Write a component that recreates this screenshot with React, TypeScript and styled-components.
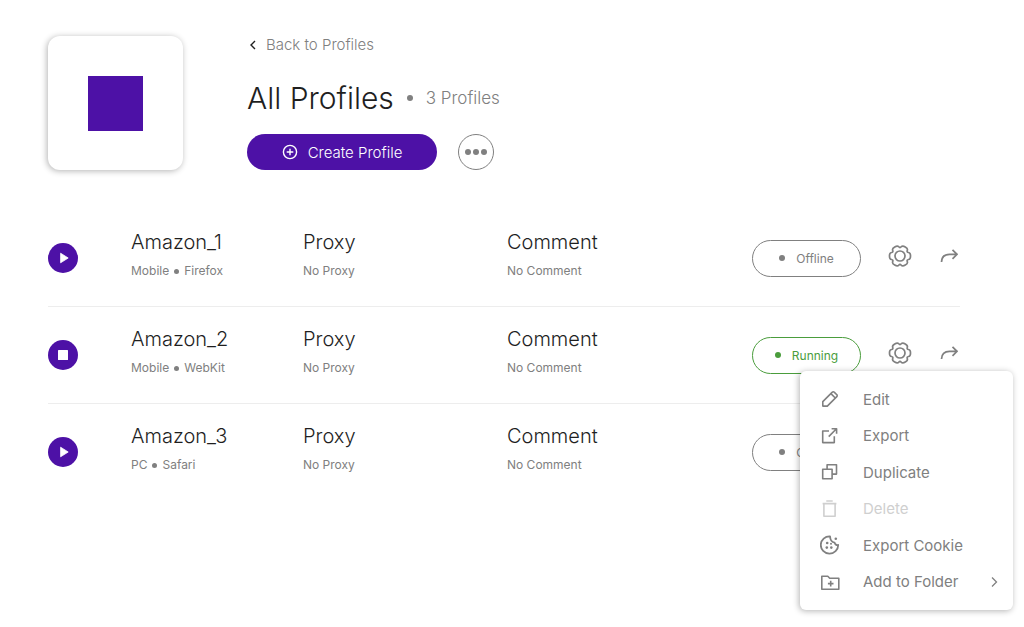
import React from "react";
import styled, { createGlobalStyle } from "styled-components";

const purple = "#4d11a6";
const grey = "#808080";
const green = "#4a9d3c";

const GlobalStyle = createGlobalStyle`
  * { box-sizing: border-box; }
  body {
    margin: 0;
    background: #fff;
    color: #1f1f1f;
    font-family: Inter, "Liberation Sans", sans-serif;
    font-size: 15px;
  }
  button { font: inherit; margin: 0; padding: 0; border: 0; background: none; cursor: pointer; }
  button:disabled { cursor: default; }
  svg { display: block; flex: none; }
  h1, h2, p, ul { margin: 0; padding: 0; list-style: none; }
`;

const Page = styled.main`
  min-height: 100vh;
  padding: 36px 64px 36px 48px;
`;

const Header = styled.header`
  display: flex;
  gap: 64px;
  margin-bottom: 40px;
`;

const FolderCard = styled.div`
  display: grid;
  place-items: center;
  flex: none;
  width: 135px;
  height: 134px;
  border-radius: 12px;
  box-shadow: -1px 1px 6px rgba(0, 0, 0, 0.3);
`;

const FolderColor = styled.div`
  width: 55px;
  height: 55px;
  background: ${purple};
`;

const Intro = styled.div`
  display: flex;
  flex-direction: column;
  align-items: flex-start;
`;

const BackLink = styled.a`
  display: flex;
  align-items: center;
  gap: 8px;
  color: ${grey};
  font-weight: 300;
  line-height: 18px;
  text-decoration: none;
`;

const TitleLine = styled.div`
  display: flex;
  align-items: center;
  gap: 13px;
  margin: 24px 0 16px;
`;

const Title = styled.h1`
  font-size: 30px;
  font-weight: 300;
  line-height: 40px;
`;

const Count = styled.span`
  color: ${grey};
  font-size: 17px;
  font-weight: 300;
  line-height: 24px;
`;

const Dot = styled.span<{ $size?: number }>`
  flex: none;
  width: ${(p) => p.$size ?? 6}px;
  height: ${(p) => p.$size ?? 6}px;
  border-radius: 50%;
  background: currentColor;
`;

const CountDot = styled(Dot)`
  color: ${grey};
`;

const HeaderActions = styled.div`
  display: flex;
  gap: 21px;
`;

const CreateButton = styled.button`
  && {
    display: flex;
    align-items: center;
    justify-content: center;
    gap: 10px;
    width: 190px;
    height: 36px;
    border-radius: 18px;
    background: ${purple};
    color: #fff;
    font-weight: 300;
  }
`;

const MoreButton = styled.button`
  && {
    display: flex;
    align-items: center;
    justify-content: center;
    gap: 2px;
    width: 36px;
    height: 36px;
    border: 1px solid ${grey};
    border-radius: 50%;
    color: ${grey};
  }
`;

const ProfileRow = styled.li`
  position: relative;
  display: grid;
  grid-template-columns: 83px 172fr 204fr 245fr 208px;
  align-items: center;
  height: 97px;
  border-bottom: 1px solid #ededed;

  &:last-child { border-bottom-color: transparent; }
`;

const RunButton = styled.button`
  && {
    display: grid;
    place-items: center;
    width: 30px;
    height: 30px;
    border-radius: 50%;
    background: ${purple};
    color: #fff;
  }
`;

const Field = styled.div`
  display: grid;
  gap: 8px;
  padding-bottom: 6px;
`;

const FieldTitle = styled.h2`
  font-size: 20px;
  font-weight: 300;
  line-height: 24px;
`;

const FieldNote = styled.p`
  display: flex;
  align-items: center;
  gap: 5px;
  color: ${grey};
  font-size: 12px;
  line-height: 18px;
`;

const RowActions = styled.div`
  display: flex;
  align-items: center;
  justify-content: space-between;
`;

const Status = styled.span<{ $running: boolean }>`
  display: flex;
  align-items: center;
  justify-content: center;
  gap: 11px;
  width: 109px;
  height: 37px;
  border: 1px solid currentColor;
  border-radius: 19px;
  color: ${(p) => (p.$running ? green : grey)};
  font-size: 12px;
`;

const RowTools = styled.div`
  display: flex;
  align-items: center;
  gap: 28px;
  padding: 0 2px 4px 0;
`;

const IconButton = styled.button`
  && { color: ${grey}; }
`;

const Menu = styled.div`
  position: absolute;
  z-index: 1;
  top: 64px;
  right: -53px;
  display: grid;
  grid-auto-rows: 1fr;
  width: 213px;
  min-height: 239px;
  padding: 10px 14px 10px 20px;
  border-radius: 6px;
  background: #fff;
  box-shadow: -1px 1px 6px rgba(0, 0, 0, 0.3);
`;

const MenuItem = styled.button`
  && {
    display: grid;
    grid-template-columns: 43px 1fr auto;
    align-items: center;
    color: ${grey};
    text-align: left;
  }
  &&:disabled { color: #cfcfcf; }
`;

const gearPath = (() => {
  const points: [number, number][] = [];
  for (let tooth = 0; tooth < 6; tooth++) {
    for (const [offset, radius] of [[-30, 7.6], [-17, 11], [17, 11]]) {
      const angle = ((tooth * 60 + offset) * Math.PI) / 180;
      points.push([12 + radius * Math.cos(angle), 12 + radius * Math.sin(angle)]);
    }
  }
  const middle = (i: number) => {
    const a = points[i % points.length];
    const b = points[(i + 1) % points.length];
    return `${((a[0] + b[0]) / 2).toFixed(2)} ${((a[1] + b[1]) / 2).toFixed(2)}`;
  };
  const curves = points.map((_, i) => {
    const p = points[(i + 1) % points.length];
    return `Q${p[0].toFixed(2)} ${p[1].toFixed(2)} ${middle(i + 1)}`;
  });
  return `M${middle(0)}${curves.join("")}Z`;
})();

const icons = {
  edit: (
    <>
      <path d="M2.800 12.600 12.300 3.100a1.300 1.300 0 0 1 1.900 0l2.600 2.600a1.300 1.300 0 0 1 0 1.900L7.300 17.100H2.800Z" />
      <path d="m10.900 4.600 4.400 4.400" />
    </>
  ),
  export: (
    <>
      <path d="M9 5H2.7v11.6h11.6v-6.3" />
      <path d="M8.7 10.6 16 3.3M11.6 2.7h5v5" />
    </>
  ),
  duplicate: (
    <>
      <path d="M2.7 7.3h9.4v9.4H2.7Z" />
      <path d="M7.1 7.3V2.7h9.4v9.4h-4.4" />
    </>
  ),
  delete: (
    <>
      <path d="M6.3 2h6.4M2.6 4.6h13.8" />
      <path d="M3.9 4.6v12.7h11.2V4.6" />
    </>
  ),
};

const LineIcon = ({ children }: { children: React.ReactNode }) => (
  <svg width="20" height="20" viewBox="0 0 20 20" fill="none" stroke="currentColor" strokeWidth="1.600" strokeLinejoin="round" aria-hidden="true">
    {children}
  </svg>
);

const CookieIcon = () => (
  <LineIcon>
    <path strokeWidth="1.800" d="M10 1.300A8.700 8.700 0 1 0 18.200 10C16.500 10.300 14.900 9.500 14.600 7.600C11.700 7.400 10.300 5.300 10 1.300Z" />
    <g fill="currentColor" stroke="none">
      <circle cx="7.200" cy="8" r="1.300" />
      <circle cx="6.800" cy="12.600" r="1.300" />
      <circle cx="11.300" cy="12.600" r="1.300" />
      <circle cx="11" cy="8.800" r="1" />
      <circle cx="15.800" cy="3.800" r="1.300" />
    </g>
  </LineIcon>
);

const FolderPlusIcon = () => (
  <LineIcon>
    <path d="M1.800 4.300h6l1.900 2h9.100v11H1.800Z" />
    <path d="M10.700 8.800v5.600M7.900 11.600h5.600" />
  </LineIcon>
);

const GearIcon = () => (
  <svg width="24" height="24" viewBox="0 0 24 24" fill="none" stroke="currentColor" strokeWidth="1.700" aria-hidden="true">
    <path d={gearPath} />
    <circle cx="12" cy="12" r="5" />
  </svg>
);

const ShareIcon = () => (
  <svg width="18" height="18" viewBox="0 0 18 18" fill="none" stroke="currentColor" strokeWidth="1.700" aria-hidden="true">
    <path d="M1.500 15C1.700 9.600 5 7.300 9.500 7.300H17M12.500 2.900 17 7.300l-4.500 4.500" />
  </svg>
);

const PlusCircleIcon = () => (
  <svg width="16" height="16" viewBox="0 0 16 16" fill="none" stroke="currentColor" strokeWidth="1.400" aria-hidden="true">
    <circle cx="8" cy="8" r="6.600" />
    <path d="M8 4.700v6.600M4.700 8h6.600" />
  </svg>
);

const ChevronLeft = () => (
  <svg width="11" height="12" viewBox="0 0 11 12" fill="none" stroke="#1f1f1f" strokeWidth="1.400" aria-hidden="true">
    <path d="M8 2 4 6l4 4" />
  </svg>
);

const ChevronRight = () => (
  <svg width="10" height="12" viewBox="0 0 10 12" fill="none" stroke="currentColor" strokeWidth="1.300" aria-hidden="true">
    <path d="m3 1.500 4.500 4.500L3 10.500" />
  </svg>
);

const PlayIcon = () => (
  <svg width="12" height="12" viewBox="0 0 12 12" fill="currentColor" aria-hidden="true">
    <path d="M3.600 1.200 11.200 6 3.600 10.800Z" stroke="currentColor" strokeWidth="0.800" strokeLinejoin="round" />
  </svg>
);

const StopIcon = () => (
  <svg width="10" height="10" viewBox="0 0 10 10" fill="currentColor" aria-hidden="true">
    <rect width="10" height="10" rx="0.500" />
  </svg>
);

const menuItems = [
  { label: "Edit", icon: <LineIcon>{icons.edit}</LineIcon> },
  { label: "Export", icon: <LineIcon>{icons.export}</LineIcon> },
  { label: "Duplicate", icon: <LineIcon>{icons.duplicate}</LineIcon> },
  { label: "Delete", icon: <LineIcon>{icons.delete}</LineIcon>, disabled: true },
  { label: "Export Cookie", icon: <CookieIcon /> },
  { label: "Add to Folder", icon: <FolderPlusIcon />, submenu: true },
];

const profiles = [
  { name: "Amazon_1", device: "Mobile", browser: "Firefox", running: false, menuOpen: false },
  { name: "Amazon_2", device: "Mobile", browser: "WebKit", running: true, menuOpen: true },
  { name: "Amazon_3", device: "PC", browser: "Safari", running: false, menuOpen: false },
];

const ProfileMenu = () => (
  <Menu aria-label="Profile actions">
    {menuItems.map((item) => (
      <MenuItem key={item.label} type="button" disabled={item.disabled}>
        {item.icon}
        <span>{item.label}</span>
        {item.submenu && <ChevronRight />}
      </MenuItem>
    ))}
  </Menu>
);

export default function App() {
  return (
    <>
      <GlobalStyle />
      <Page>
        <Header>
          <FolderCard>
            <FolderColor />
          </FolderCard>
          <Intro>
            <BackLink href="#profiles">
              <ChevronLeft />
              Back to Profiles
            </BackLink>
            <TitleLine>
              <Title>All Profiles</Title>
              <CountDot />
              <Count>3 Profiles</Count>
            </TitleLine>
            <HeaderActions>
              <CreateButton type="button">
                <PlusCircleIcon />
                Create Profile
              </CreateButton>
              <MoreButton type="button" aria-label="More">
                <Dot />
                <Dot />
                <Dot />
              </MoreButton>
            </HeaderActions>
          </Intro>
        </Header>
        <ul>
          {profiles.map((profile) => (
            <ProfileRow key={profile.name}>
              <RunButton type="button" aria-label={profile.running ? "Stop" : "Start"}>
                {profile.running ? <StopIcon /> : <PlayIcon />}
              </RunButton>
              <Field>
                <FieldTitle>{profile.name}</FieldTitle>
                <FieldNote>
                  {profile.device}
                  <Dot $size={5} />
                  {profile.browser}
                </FieldNote>
              </Field>
              <Field>
                <FieldTitle>Proxy</FieldTitle>
                <FieldNote>No Proxy</FieldNote>
              </Field>
              <Field>
                <FieldTitle>Comment</FieldTitle>
                <FieldNote>No Comment</FieldNote>
              </Field>
              <RowActions>
                <Status $running={profile.running}>
                  <Dot />
                  {profile.running ? "Running" : "Offline"}
                </Status>
                <RowTools>
                  <IconButton type="button" aria-label="Settings">
                    <GearIcon />
                  </IconButton>
                  <IconButton type="button" aria-label="Share">
                    <ShareIcon />
                  </IconButton>
                </RowTools>
              </RowActions>
              {profile.menuOpen && <ProfileMenu />}
            </ProfileRow>
          ))}
        </ul>
      </Page>
    </>
  );
}
